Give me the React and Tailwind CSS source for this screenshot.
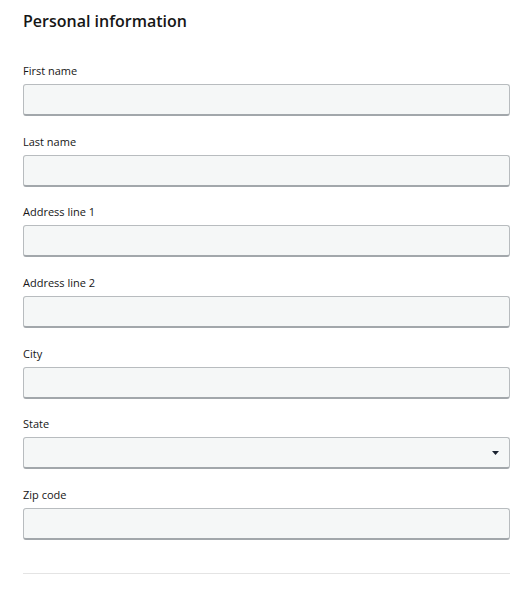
import React from "react";

const FIELDS = [
  { label: "First name" },
  { label: "Last name" },
  { label: "Address line 1" },
  { label: "Address line 2" },
  { label: "City" },
  { label: "State", select: true },
  { label: "Zip code" },
];

function Field({ label, select }) {
  return (
    <div className="flex flex-col">
      <label className="text-[11px] leading-[16px] text-[#161616] mb-[5px]">{label}</label>
      <div className="relative h-[32px] rounded-[3px] bg-[#f5f7f7] border border-[#b8bcbf] border-b-2 border-b-[#a2a7ab]">
        {select && (
          <svg className="absolute right-[10px] top-[13px]" width="7" height="4" viewBox="0 0 7 4">
            <path d="M0 0h7L3.5 4z" fill="#1a2230" />
          </svg>
        )}
      </div>
    </div>
  );
}

export default function App() {
  return (
    <div
      className="w-[532px] h-[590px] bg-white pl-[23px] pr-[22px] pt-[9px]"
      style={{ fontFamily: '"Open Sans", "Noto Sans", sans-serif' }}
    >
      <h2 className="text-[16px] leading-[24px] font-semibold text-[#161616]">Personal information</h2>
      <div className="mt-[30px] flex flex-col gap-[17.7px]">
        {FIELDS.map((f) => (
          <Field key={f.label} {...f} />
        ))}
      </div>
      <div className="mt-[33px] h-px bg-[#e4e4e4]" />
    </div>
  );
}
